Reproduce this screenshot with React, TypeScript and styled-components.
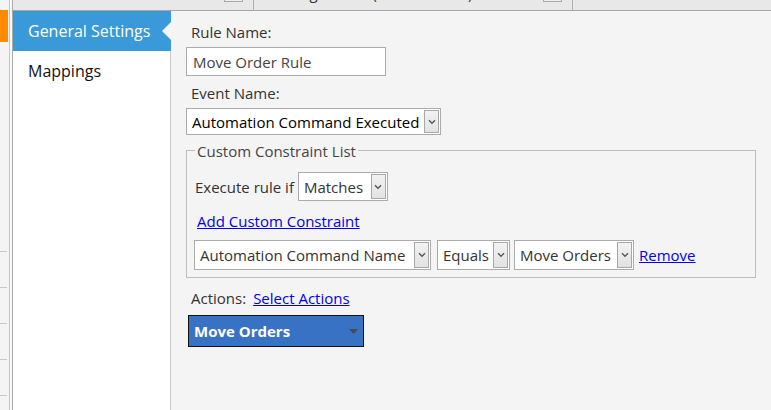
import React from "react";
import styled, { createGlobalStyle } from "styled-components";

const GlobalStyle = createGlobalStyle`
  html, body { margin: 0; padding: 0; }
  body {
    font-family: "Open Sans", "Noto Sans", sans-serif;
    width: 771px;
    height: 410px;
    overflow: hidden;
    background: #f4f4f4;
  }
  * { box-sizing: border-box; }
`;

const Page = styled.div`
  display: flex;
  width: 771px;
  height: 410px;
  overflow: hidden;
`;

const LeftRail = styled.div`
  width: 10px;
  flex-shrink: 0;
  background: #f4f4f4;
  border-right: 1px solid #c4c4c4;
  display: flex;
  flex-direction: column;
`;

const OrangeMark = styled.div`
  margin-top: 10px;
  width: 8px;
  height: 32px;
  background: #ff8a00;
`;

const Ticks = styled.div`
  margin-top: 209px;
  display: flex;
  flex-direction: column;
  gap: 35px;
`;

const Tick = styled.div`
  width: 7px;
  height: 1px;
  background: #c8c8c8;
`;

const RailGap = styled.div`
  width: 2px;
  flex-shrink: 0;
  background: #fafafa;
`;

const Main = styled.div`
  flex: 1;
  min-width: 0;
  border-left: 1px solid #a9a9a9;
  display: flex;
  flex-direction: column;
`;

const TopBar = styled.div`
  height: 11px;
  flex-shrink: 0;
  background: #e8e8e8;
  border-bottom: 1px solid #a8a8a8;
  display: flex;
  overflow: hidden;
`;

const Tab = styled.div<{ $w: number }>`
  width: ${(p) => p.$w}px;
  flex-shrink: 0;
  border-right: 1px solid #b0b0b0;
  display: flex;
  align-items: flex-start;
  overflow: hidden;
`;

const TabCaption = styled.div<{ $pad: number }>`
  margin-top: -17px;
  padding-left: ${(p) => p.$pad}px;
  font-size: 15px;
  line-height: 20px;
  color: #333;
  white-space: nowrap;
`;

const TabBox = styled.div`
  margin-left: auto;
  margin-right: 10px;
  margin-top: -12px;
  width: 19px;
  height: 14px;
  border: 1px solid #a8a8a8;
  background: #efefef;
  flex-shrink: 0;
`;

const Body = styled.div`
  flex: 1;
  min-height: 0;
  display: flex;
`;

const Nav = styled.div`
  width: 158px;
  flex-shrink: 0;
  background: #ffffff;
  border-right: 1px solid #c8c8c8;
`;

const NavItem = styled.div<{ $active?: boolean }>`
  position: relative;
  height: 40px;
  padding: 0 0 0 15px;
  margin-right: ${(p) => (p.$active ? "-1px" : "0")};
  line-height: 40px;
  font-size: 16px;
  color: ${(p) => (p.$active ? "#ffffff" : "#111111")};
  background: ${(p) => (p.$active ? "#3a99d9" : "transparent")};
  white-space: nowrap;

  &::after {
    content: "";
    display: ${(p) => (p.$active ? "block" : "none")};
    position: absolute;
    right: 0;
    top: 11px;
    width: 0;
    height: 0;
    border-style: solid;
    border-width: 9px 9px 9px 0;
    border-color: transparent #f4f4f4 transparent transparent;
  }
`;

const Content = styled.div`
  flex: 1;
  min-width: 0;
  background: #f4f4f4;
  padding: 11px 0 0 15px;
  display: flex;
  flex-direction: column;
  align-items: flex-start;
`;

const FieldLabel = styled.div`
  margin-left: 5px;
  margin-bottom: 5px;
  font-size: 15px;
  line-height: 20px;
  color: #333;
`;

const TextInput = styled.input`
  width: 200px;
  height: 29px;
  margin: 0 0 7px 0;
  padding: 0 6px;
  border: 1px solid #ababab;
  background: #ffffff;
  font-family: "Open Sans", "Noto Sans", sans-serif;
  font-size: 15px;
  color: #444;
  outline: none;
`;

const SelectBox = styled.div<{ $w: number; $h: number }>`
  width: ${(p) => p.$w}px;
  height: ${(p) => p.$h}px;
  flex-shrink: 0;
  border: 1px solid #ababab;
  background: #ffffff;
  display: flex;
  align-items: stretch;
  padding: 1px;
`;

const SelectValue = styled.div<{ $dark?: boolean }>`
  flex: 1;
  min-width: 0;
  padding-left: 4px;
  display: flex;
  align-items: center;
  font-size: 15px;
  color: ${(p) => (p.$dark ? "#000" : "#333")};
  white-space: nowrap;
  overflow: hidden;
`;

const DropButton = styled.div`
  width: 15px;
  flex-shrink: 0;
  border: 1px solid #a8a8a8;
  background: linear-gradient(#f2f2f2, #e2e2e2);
  display: flex;
  align-items: center;
  justify-content: center;
`;

const EventSelectWrap = styled.div`
  margin-bottom: 15px;
`;

const ConstraintBox = styled.div`
  position: relative;
  width: 570px;
  border: 1px solid #bdbdbd;
  padding: 21px 0 7px 7px;
`;

const Legend = styled.div`
  position: absolute;
  top: -10px;
  left: 8px;
  padding: 0 2px;
  background: #f4f4f4;
  font-size: 15px;
  line-height: 20px;
  color: #444;
  white-space: nowrap;
`;

const Row = styled.div<{ $h: number; $gap: number }>`
  display: flex;
  align-items: center;
  height: ${(p) => p.$h}px;
  gap: ${(p) => p.$gap}px;
`;

const InlineLabel = styled.span`
  font-size: 15px;
  line-height: 20px;
  color: #333;
  white-space: nowrap;
`;

const Link = styled.a`
  font-size: 15px;
  line-height: 20px;
  color: #0000ee;
  text-decoration: underline;
  cursor: pointer;
  white-space: nowrap;
`;

const LinkLine = styled.div`
  margin-top: 10px;
  margin-left: 3px;
  line-height: 20px;
`;

const ConstraintRow = styled(Row)`
  margin-top: 9px;
`;

const Spacer = styled.span<{ $w: number }>`
  width: ${(p) => p.$w}px;
  flex-shrink: 0;
`;

const ActionsRow = styled.div`
  margin-top: 10px;
  margin-left: 5px;
  display: flex;
  align-items: center;
  gap: 7px;
  height: 20px;
`;

const ActionChip = styled.div`
  margin-top: 7px;
  margin-left: 2px;
  width: 176px;
  height: 32px;
  background: #3872c5;
  border: 1px solid #111;
  display: flex;
  align-items: center;
  justify-content: space-between;
  padding: 0 5px 0 5px;
  font-size: 15px;
  font-weight: 700;
  color: #ffffff;
  white-space: nowrap;
`;

const Chevron = () => (
  <svg width="8" height="6" viewBox="0 0 8 6">
    <path d="M1 1.2 L4 4.2 L7 1.2" fill="none" stroke="#555" strokeWidth="1.4" />
  </svg>
);

const Caret = () => (
  <svg width="9" height="5" viewBox="0 0 9 5">
    <path d="M0 0 L9 0 L4.5 5 Z" fill="#4a4a4a" />
  </svg>
);

const Select = ({ w, h, value, dark }: { w: number; h: number; value: string; dark?: boolean }) => (
  <SelectBox $w={w} $h={h}>
    <SelectValue $dark={dark}>{value}</SelectValue>
    <DropButton>
      <Chevron />
    </DropButton>
  </SelectBox>
);

export default function App() {
  return (
    <>
      <GlobalStyle />
      <Page>
        <LeftRail>
          <OrangeMark />
          <Ticks>
            <Tick />
            <Tick />
            <Tick />
            <Tick />
            <Tick />
          </Ticks>
        </LeftRail>
        <RailGap />
        <Main>
          <TopBar>
            <Tab $w={241}>
              <TabBox />
            </Tab>
            <Tab $w={319}>
              <TabCaption $pad={19}>Configuration (Move Orders)</TabCaption>
              <TabBox />
            </Tab>
          </TopBar>
          <Body>
            <Nav>
              <NavItem $active>General Settings</NavItem>
              <NavItem>Mappings</NavItem>
            </Nav>
            <Content>
              <FieldLabel>Rule Name:</FieldLabel>
              <TextInput readOnly defaultValue="Move Order Rule" />
              <FieldLabel>Event Name:</FieldLabel>
              <EventSelectWrap>
                <Select w={255} h={27} value="Automation Command Executed" dark />
              </EventSelectWrap>
              <ConstraintBox>
                <Legend>Custom Constraint List</Legend>
                <Row $h={29} $gap={4}>
                  <InlineLabel style={{ marginLeft: 1 }}>Execute rule if</InlineLabel>
                  <Select w={90} h={29} value="Matches" />
                </Row>
                <LinkLine>
                  <Link>Add Custom Constraint</Link>
                </LinkLine>
                <ConstraintRow $h={30} $gap={0}>
                  <Select w={237} h={30} value="Automation Command Name" />
                  <Spacer $w={6} />
                  <Select w={73} h={30} value="Equals" />
                  <Spacer $w={4} />
                  <Select w={120} h={30} value="Move Orders" />
                  <Spacer $w={5} />
                  <Link>Remove</Link>
                </ConstraintRow>
              </ConstraintBox>
              <ActionsRow>
                <InlineLabel>Actions:</InlineLabel>
                <Link>Select Actions</Link>
              </ActionsRow>
              <ActionChip>
                <span>Move Orders</span>
                <Caret />
              </ActionChip>
            </Content>
          </Body>
        </Main>
      </Page>
    </>
  );
}
